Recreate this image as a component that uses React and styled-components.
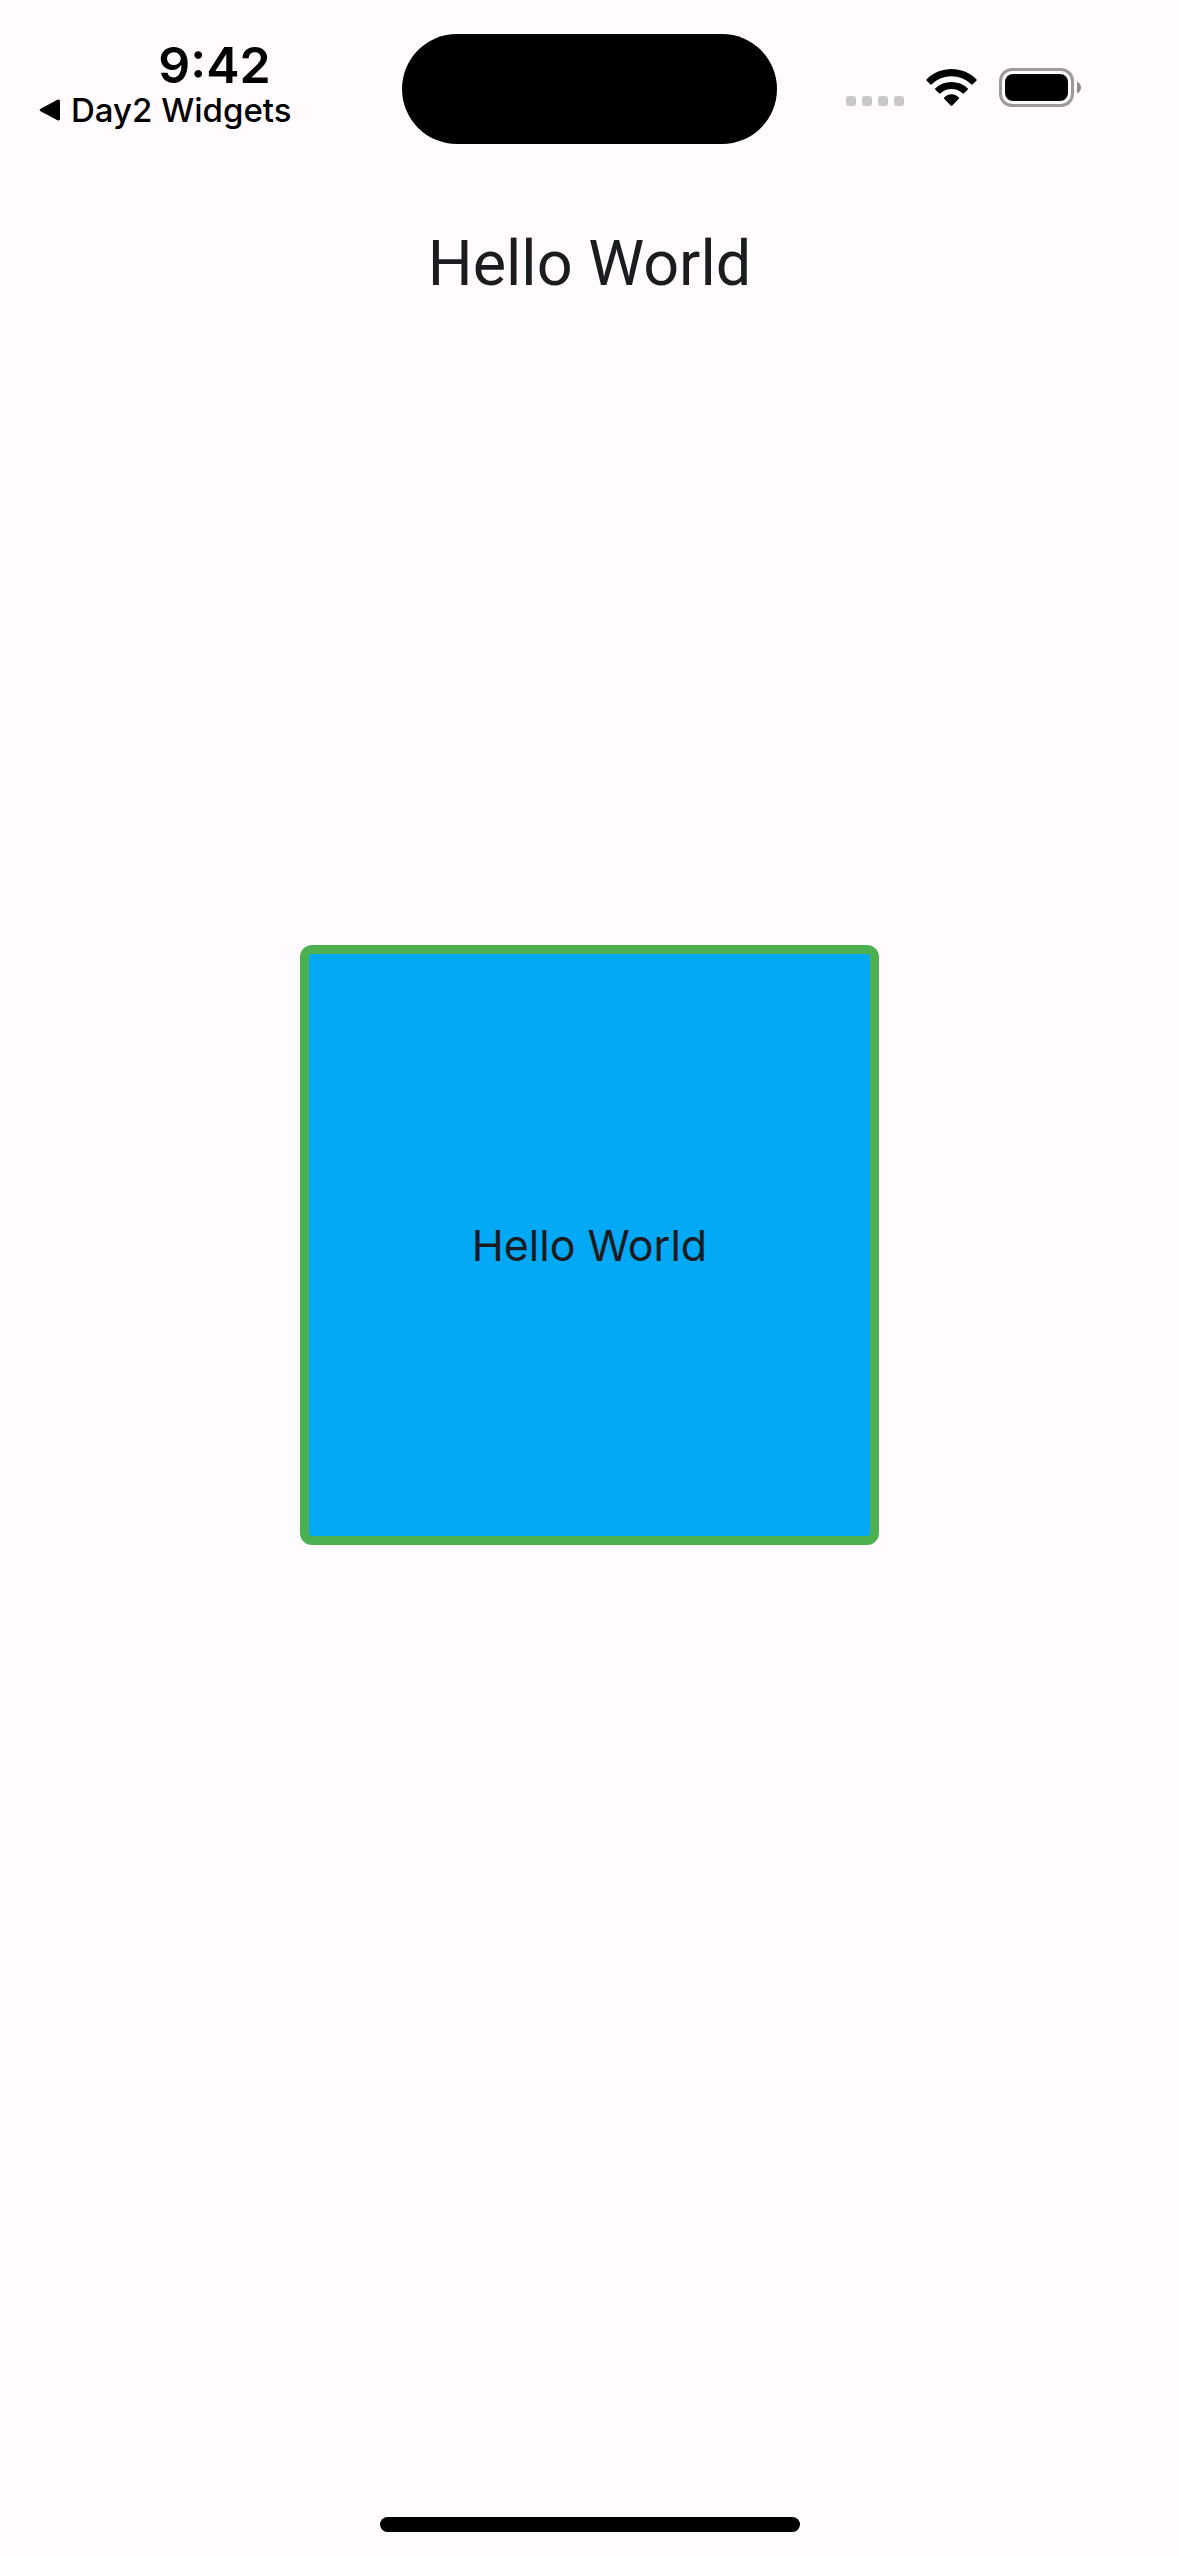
import React from "react";
import styled, { createGlobalStyle } from "styled-components";

const GlobalStyle = createGlobalStyle`
  *, *::before, *::after { box-sizing: border-box; }
  body {
    margin: 0;
    background: #fffbfe;
    color: #1c1b1f;
    font-family: Inter, "Liberation Sans", sans-serif;
  }
`;

const Screen = styled.div`
  min-height: 100vh;
  display: flex;
  flex-direction: column;
`;

const StatusBar = styled.header`
  display: grid;
  grid-template-columns: 1fr 375px 1fr;
  align-items: start;
  padding: 34px 0 33px;
  color: #000;
`;

const StatusLeft = styled.div`
  display: flex;
  flex-direction: column;
  align-items: center;
  padding-left: 27px;
`;

const Clock = styled.time`
  font-size: 50px;
  line-height: 62px;
  font-weight: 600;
`;

const BackButton = styled.button`
  align-self: flex-start;
  display: flex;
  align-items: center;
  gap: 10px;
  padding: 0 0 0 12px;
  border: 0;
  background: none;
  color: inherit;
  font-family: inherit;
  font-size: 33px;
  line-height: 28px;
  font-weight: 500;
  white-space: nowrap;
  cursor: pointer;
`;

const Island = styled.div`
  height: 110px;
  border-radius: 55px;
  background: #000;
`;

const StatusIcons = styled.div`
  display: flex;
  gap: 22px;
  padding: 34px 0 0 69px;
`;

const AppBar = styled.div`
  display: flex;
  align-items: center;
  justify-content: center;
  height: 168px;
  padding-top: 6px;
`;

const Title = styled.h1`
  margin: 0;
  font-family: Roboto, "Liberation Sans", sans-serif;
  font-size: 63px;
  line-height: 84px;
  font-weight: 400;
`;

const Body = styled.main`
  flex: 1;
  padding: 600px 300px;
`;

const Card = styled.div`
  display: flex;
  align-items: center;
  justify-content: center;
  height: 600px;
  border: 9px solid #4caf50;
  border-radius: 12px;
  background: #03a9f4;
  font-size: 43px;
  line-height: 60px;
`;

const Footer = styled.footer`
  display: flex;
  justify-content: center;
  padding-bottom: 24px;
`;

const HomeIndicator = styled.div`
  width: 420px;
  height: 15px;
  border-radius: 8px;
  background: #000;
`;

const BackArrow = () => (
  <svg width="22" height="22" viewBox="0 0 22 22" aria-hidden="true">
    <path d="M2 9.5 18.5.8Q21 0 21 2.500V19.500Q21 22 18.500 21.200L2 12.500Q-.8 11 2 9.500Z" />
  </svg>
);

const CellularDots = () => (
  <svg width="58" height="39" viewBox="0 0 58 39" fill="#cbc8cb" aria-hidden="true">
    {[0, 16, 32, 48].map((x) => (
      <rect key={x} x={x} y="28" width="10" height="10" rx="3" />
    ))}
  </svg>
);

const Wifi = () => (
  <svg width="51" height="39" viewBox="0 0 51 39" aria-hidden="true">
    <path d="M.7 11.300C14-2.400 37-2.400 50.300 11.300Q51 12 50.300 12.800L46.700 16.300Q46 17 45.200 16.300C34.500 5.600 16.500 5.600 5.800 16.300Q5 17 4.300 16.300L.7 12.800Q0 12 .7 11.300Z" />
    <path d="M9.400 20.300C18 12 33 12 41.600 20.300Q42.300 21 41.600 21.800L38 25.300Q37.200 26 36.500 25.300C30.500 19.500 20.500 19.500 14.500 25.300Q13.800 26 13 25.300L9.400 21.800Q8.700 21 9.400 20.300Z" />
    <path d="M18.400 29.300C22.300 25.300 28.700 25.300 32.600 29.300Q33.500 30.200 32.600 31L26.300 37.400Q25.500 38.200 24.700 37.400L18.400 31Q17.500 30.200 18.400 29.300Z" />
  </svg>
);

const Battery = () => (
  <svg width="82" height="39" viewBox="0 0 82 39" aria-hidden="true">
    <rect x="1.500" y="1.500" width="72" height="36" rx="11.500" fill="none" stroke="#9b999b" strokeWidth="3" />
    <rect x="6" y="6" width="63" height="27" rx="8" />
    <path d="M78 13.500Q82 15.500 82 19.500T78 25.500Z" fill="#8f8d8f" />
  </svg>
);

export default function App() {
  return (
    <>
      <GlobalStyle />
      <Screen>
        <StatusBar>
          <StatusLeft>
            <Clock>9:42</Clock>
            <BackButton type="button">
              <BackArrow />
              Day2 Widgets
            </BackButton>
          </StatusLeft>
          <Island />
          <StatusIcons>
            <CellularDots />
            <Wifi />
            <Battery />
          </StatusIcons>
        </StatusBar>
        <AppBar>
          <Title>Hello World</Title>
        </AppBar>
        <Body>
          <Card>Hello World</Card>
        </Body>
        <Footer>
          <HomeIndicator />
        </Footer>
      </Screen>
    </>
  );
}
